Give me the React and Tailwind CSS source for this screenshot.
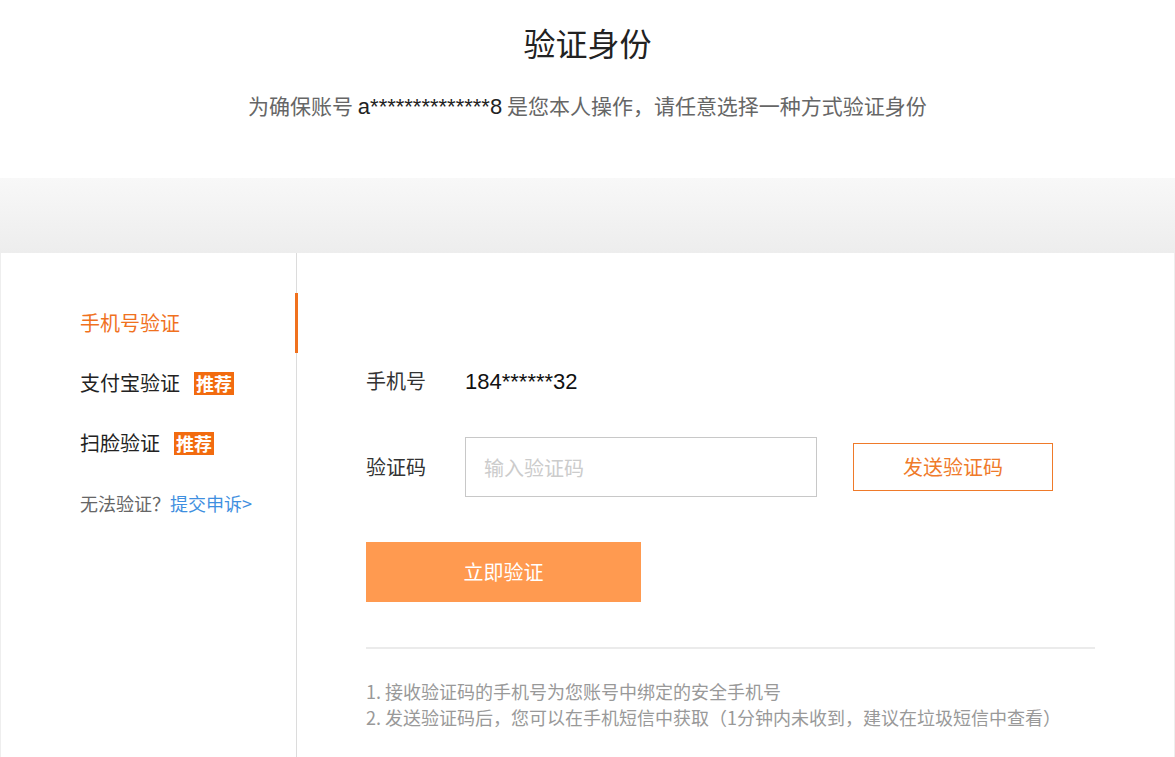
import React from 'react'

const font = { fontFamily: '"Microsoft YaHei", "Noto Sans CJK SC", sans-serif' }
const latin = { fontFamily: '"Liberation Sans", Arial, sans-serif' }

function SideNav() {
  const items = [
    { label: "手机号验证", active: true },
    { label: "支付宝验证", badge: true },
    { label: "扫脸验证", badge: true },
  ];

  return (
    <div className="w-[296px] shrink-0 border-r border-[#dcdcdc] pt-10">
      {items.map((item, idx) => (
        <div key={idx} className="relative flex items-center h-[60px] pl-[79px]">
          <span className={`text-[20px] ${item.active ? "text-[#f0711e]" : "text-[#222]"}`}>{item.label}</span>
          {item.badge && (
            <span className="ml-[14px] bg-[#f26b0f] text-white text-[18px] font-bold leading-[23px] px-[2px]">推荐</span>
          )}
          {item.active && <span className="absolute right-[-2px] top-0 h-full w-[3px] bg-[#f0711e]" />}
        </div>
      ))}
      <div className="pl-[79px] mt-[17px] text-[18px] text-[#666]">
        无法验证？<span className="text-[#3f8fe0]">提交申诉&gt;</span>
      </div>
    </div>
  );
}

function PhoneForm() {
  return (
    <div className="pl-[69px] pt-[98px] pb-[60px]">
      <div className="flex items-center h-[60px]">
        <span className="w-[99px] text-[20px] text-[#333]">手机号</span>
        <span className="text-[22px] text-[#111]" style={latin}>184******32</span>
      </div>

      <div className="flex items-center mt-[26px]">
        <span className="w-[99px] text-[20px] text-[#333]">验证码</span>
        <input
          placeholder="输入验证码"
          className="w-[352px] h-[60px] border border-[#c8c8c8] px-[18px] text-[20px] outline-none placeholder:text-[#cccccc]"
          style={font}
        />
        <button className="ml-[36px] w-[200px] h-[48px] border border-[#ef7a2a] text-[#ef7a2a] text-[20px] bg-white">
          发送验证码
        </button>
      </div>

      <button className="mt-[45px] w-[275px] h-[60px] bg-[#ff9a50] text-white text-[20px]">立即验证</button>

      <div className="mt-[45px] w-[729px] h-[2px] bg-[#ebebeb]" />

      <ul className="mt-[29px] text-[18px] leading-[26px] text-[#999]">
        <li>1. 接收验证码的手机号为您账号中绑定的安全手机号</li>
        <li>2. 发送验证码后，您可以在手机短信中获取（1分钟内未收到，建议在垃圾短信中查看）</li>
      </ul>
    </div>
  );
}

export default function App() {
  return (
    <div className="min-h-screen bg-white" style={font}>
      <div className="h-[178px] flex flex-col items-center">
        <h1 className="mt-[20px] text-[32px] leading-[44px] text-[#222]">验证身份</h1>
        <p className="mt-[28px] text-[21px] leading-[26px] text-[#666]">
          为确保账号 <span className="text-[#222] text-[22px]" style={latin}>a**************8</span> 是您本人操作，请任意选择一种方式验证身份
        </p>
      </div>

      <div className="h-[75px] bg-gradient-to-b from-[#f8f8f8] to-[#ededed]" />

      <div className="flex bg-white border-l border-r border-[#eeeeee] min-h-[600px]">
        <SideNav />
        <PhoneForm />
      </div>
    </div>
  )
}
